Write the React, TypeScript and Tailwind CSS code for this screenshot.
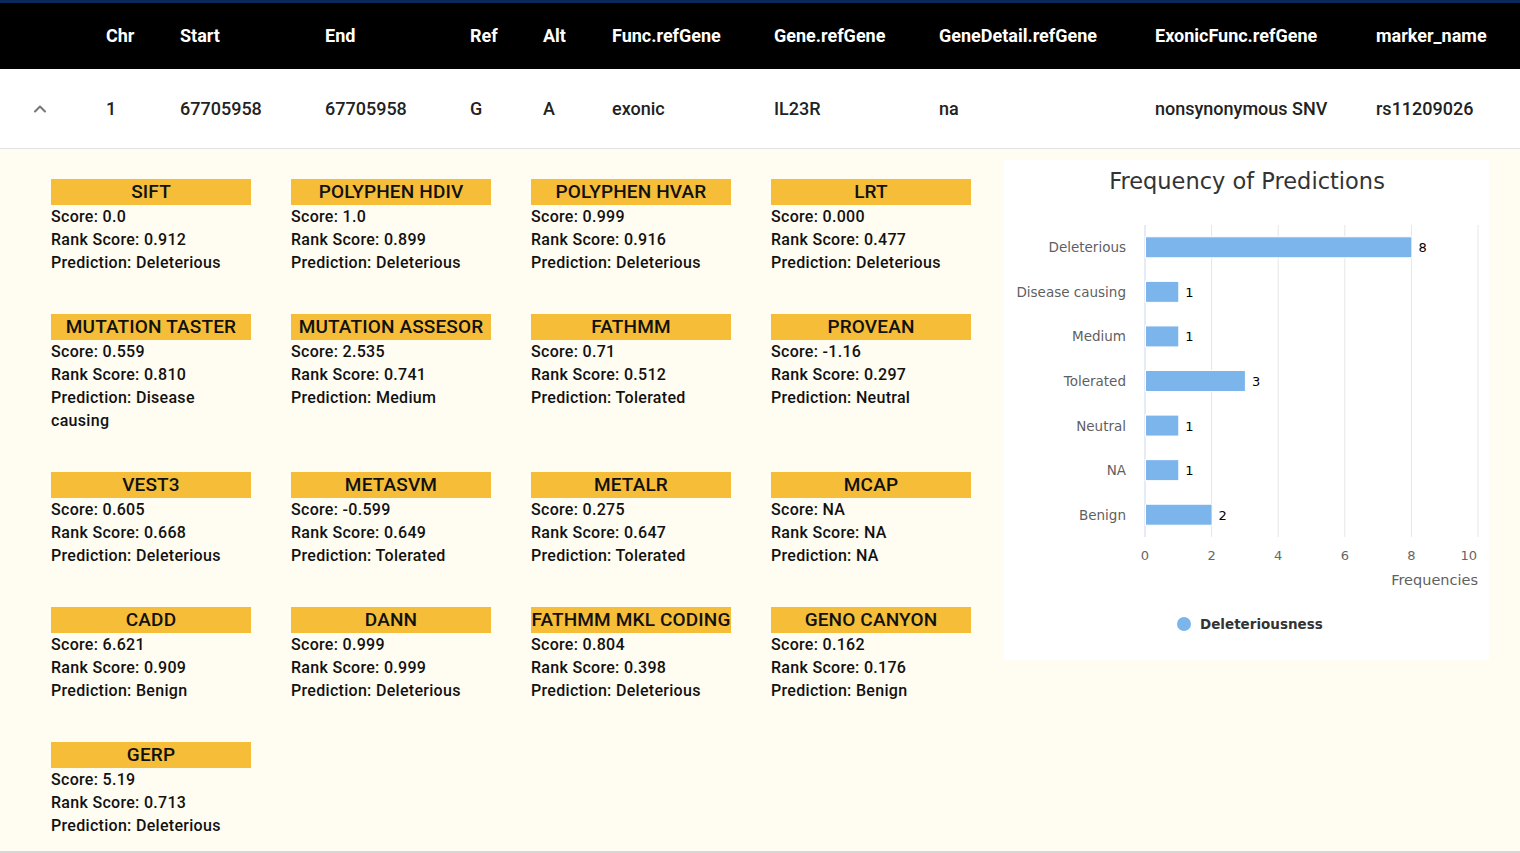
import React from "react";
import { ChevronUp } from "lucide-react";

const columns = [
  "",
  "Chr",
  "Start",
  "End",
  "Ref",
  "Alt",
  "Func.refGene",
  "Gene.refGene",
  "GeneDetail.refGene",
  "ExonicFunc.refGene",
  "marker_name",
];

const values = [
  "1",
  "67705958",
  "67705958",
  "G",
  "A",
  "exonic",
  "IL23R",
  "na",
  "nonsynonymous SNV",
  "rs11209026",
];

const tools = [
  { name: "SIFT", score: "0.0", rank: "0.912", pred: "Deleterious" },
  { name: "POLYPHEN HDIV", score: "1.0", rank: "0.899", pred: "Deleterious" },
  { name: "POLYPHEN HVAR", score: "0.999", rank: "0.916", pred: "Deleterious" },
  { name: "LRT", score: "0.000", rank: "0.477", pred: "Deleterious" },
  { name: "MUTATION TASTER", score: "0.559", rank: "0.810", pred: "Disease causing" },
  { name: "MUTATION ASSESOR", score: "2.535", rank: "0.741", pred: "Medium" },
  { name: "FATHMM", score: "0.71", rank: "0.512", pred: "Tolerated" },
  { name: "PROVEAN", score: "-1.16", rank: "0.297", pred: "Neutral" },
  { name: "VEST3", score: "0.605", rank: "0.668", pred: "Deleterious" },
  { name: "METASVM", score: "-0.599", rank: "0.649", pred: "Tolerated" },
  { name: "METALR", score: "0.275", rank: "0.647", pred: "Tolerated" },
  { name: "MCAP", score: "NA", rank: "NA", pred: "NA" },
  { name: "CADD", score: "6.621", rank: "0.909", pred: "Benign" },
  { name: "DANN", score: "0.999", rank: "0.999", pred: "Deleterious" },
  { name: "FATHMM MKL CODING", score: "0.804", rank: "0.398", pred: "Deleterious" },
  { name: "GENO CANYON", score: "0.162", rank: "0.176", pred: "Benign" },
  { name: "GERP", score: "5.19", rank: "0.713", pred: "Deleterious" },
];

const freq = [
  { label: "Deleterious", n: 8 },
  { label: "Disease causing", n: 1 },
  { label: "Medium", n: 1 },
  { label: "Tolerated", n: 3 },
  { label: "Neutral", n: 1 },
  { label: "NA", n: 1 },
  { label: "Benign", n: 2 },
];

const gridCols =
  "grid grid-cols-[106px_74px_145px_145px_73px_69px_162px_165px_216px_221px_1fr]";

const ToolCard = ({
  name,
  score,
  rank,
  pred,
}: {
  name: string;
  score: string;
  rank: string;
  pred: string;
}) => {
  return (
    <div className="w-[200px]">
      <div className="h-[26px] bg-[#f6bd38] flex items-center justify-center text-[19px] tracking-[0.15px] font-medium text-[#111] whitespace-nowrap">
        {name}
      </div>
      <div className="text-[16px] tracking-[0.3px] font-medium text-[#111] leading-[23px]">
        <p>Score: {score}</p>
        <p>Rank Score: {rank}</p>
        <p>Prediction: {pred}</p>
      </div>
    </div>
  );
};

const FreqChart = () => {
  const x0 = 141;
  const unit = 33.3;
  const top = 65;
  const band = 312 / 7;
  return (
    <div className="w-[485px] h-[500px] bg-white mt-[11px] shrink-0">
      <svg width="485" height="500" style={{ fontFamily: "'DejaVu Sans', 'Open Sans', sans-serif" }}>
        <text x="243" y="29" textAnchor="middle" fontSize="22.5" fill="#333">
          Frequency of Predictions
        </text>
        {[0, 2, 4, 6, 8, 10].map((t) => (
          <g key={t}>
            <line
              x1={x0 + t * unit}
              x2={x0 + t * unit}
              y1={top}
              y2={top + 312}
              stroke={t === 0 ? "#ccd6eb" : "#e6e6e6"}
              strokeWidth="1"
            />
            <text
              x={t === 10 ? x0 + t * unit - 1 : x0 + t * unit}
              y="400"
              textAnchor={t === 10 ? "end" : "middle"}
              fontSize="13"
              fill="#666"
            >
              {t}
            </text>
          </g>
        ))}
        {freq.map((f, i) => {
          const cy = top + band * i + band / 2;
          return (
            <g key={f.label}>
              <text x="122" y={cy + 5} textAnchor="end" fontSize="13.5" fill="#5f5f5f">
                {f.label}
              </text>
              <rect
                x={x0 + 0.5}
                y={cy - 10.5}
                width={f.n * unit}
                height="21"
                fill="#7cb5ec"
                stroke="#fff"
                strokeWidth="1"
              />
              <text x={x0 + f.n * unit + 7} y={cy + 5} fontSize="13" fill="#000">
                {f.n}
              </text>
            </g>
          );
        })}
        <text x="474" y="425" textAnchor="end" fontSize="14.5" fill="#5f5f5f">
          Frequencies
        </text>
        <circle cx="180" cy="464" r="7" fill="#7cb5ec" />
        <text x="196" y="469" fontSize="13.5" fontWeight="bold" fill="#333">
          Deleteriousness
        </text>
      </svg>
    </div>
  );
};

export default function App() {
  return (
    <div className="w-[1520px] h-[853px] bg-[#fffcf2] font-['Roboto',sans-serif] overflow-hidden border-b-2 border-[#d6d6d6]">
      <div className="border-t-[3px] border-[#0b2a5b]">
        <div className={`${gridCols} h-[66px] bg-black items-center text-white text-[18px] font-bold pb-[2px]`}>
          {columns.map((c, i) => (
            <div key={i} className="whitespace-nowrap">
              {c}
            </div>
          ))}
        </div>
        <div className={`${gridCols} h-[80px] bg-white items-center text-[#222] text-[18px] font-medium border-b border-[#e2e2e2]`}>
          <div className="pl-[30px] text-[#777]">
            <ChevronUp size={20} strokeWidth={2.5} />
          </div>
          {values.map((v, i) => (
            <div key={i} className="whitespace-nowrap">
              {v}
            </div>
          ))}
        </div>
      </div>
      <div className="flex pl-[51px] gap-[33px]">
        <div className="grid grid-cols-[repeat(4,200px)] gap-x-[40px] gap-y-[40px] pt-[30px] content-start">
          {tools.map((t) => (
            <ToolCard key={t.name} {...t} />
          ))}
        </div>
        <FreqChart />
      </div>
    </div>
  );
}
